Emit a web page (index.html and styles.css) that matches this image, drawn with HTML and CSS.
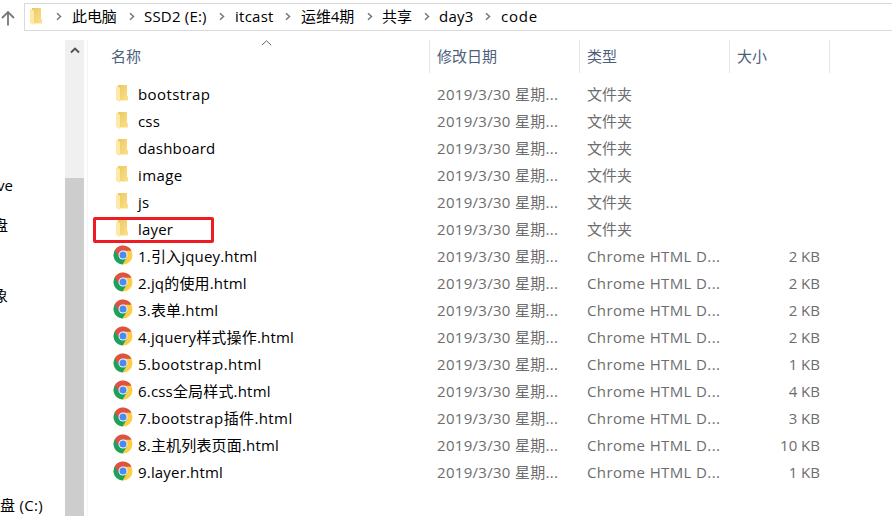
FILE: index.html
```html
<!DOCTYPE html>
<html lang="zh-CN">
<head>
<meta charset="utf-8">
<title>code</title>
<link rel="stylesheet" href="styles.css">
</head>
<body>
<svg class="defs" aria-hidden="true">
  <defs>
    <linearGradient id="fold" x1="0" x2="1" y1="0" y2="1"><stop offset="0" stop-color="#e9c863"/><stop offset="1" stop-color="#ffe08a"/></linearGradient>
    <symbol id="folder" viewBox="0 0 13 18">
      <path d="M2 0H11V11L12 11.5V15.5H2Z" fill="url(#fold)"/>
      <path d="M0 .5L4 3V17L0 15Z" fill="#ffe9a8"/>
    </symbol>
    <symbol id="chrome" viewBox="0 0 20 20">
      <circle cx="10" cy="10" r="9.5" fill="#ffcd42"/>
      <path d="M10 10L1.77 5.25A9.5 9.5 0 0 0 9.6 19.5L14 12.3Z" fill="#1aa260"/>
      <path d="M1.77 5.25A9.5 9.5 0 0 1 18.5 5.7H10L5.9 12.1Z" fill="#de5246"/>
      <circle cx="10" cy="10" r="4.5" fill="#f5f5f5"/>
      <circle cx="10" cy="10" r="3.5" fill="#4a8af4"/>
    </symbol>
    <symbol id="chev" viewBox="0 0 6 8"><path d="M1 .7L4.5 4L1 7.3" fill="none" stroke="#777" stroke-width="1.5"/></symbol>
  </defs>
</svg>
<div class="window">
  <header class="bar">
    <svg class="up" viewBox="0 0 16 16"><path d="M8 15.5V2M2 8L8 2L14 8" fill="none" stroke="#777" stroke-width="1.8"/></svg>
    <nav class="address">
      <svg class="folder"><use href="#folder"/></svg>
      <svg class="chev"><use href="#chev"/></svg><span>此电脑</span>
      <svg class="chev"><use href="#chev"/></svg><span class="drive">SSD2 (E:)</span>
      <svg class="chev"><use href="#chev"/></svg><span class="plain">itcast</span>
      <svg class="chev"><use href="#chev"/></svg><span>运维4期</span>
      <svg class="chev"><use href="#chev"/></svg><span>共享</span>
      <svg class="chev"><use href="#chev"/></svg><span class="plain">day3</span>
      <svg class="chev"><use href="#chev"/></svg><span class="last">code</span>
    </nav>
  </header>
  <main class="body">
    <aside class="tree"><span class="cut-ve">ve</span><span class="cut-glyph">盘</span><span class="cut-glyph">象</span><span class="disk">盘 (C:)</span></aside>
    <div class="scroll"><svg viewBox="0 0 10 7"><path d="M1 5.5L5 1.5L9 5.5" fill="none" stroke="#505050" stroke-width="1.8"/></svg><div class="thumb"></div></div>
    <section class="list">
      <div class="head"><span class="name">名称<svg class="sort" viewBox="0 0 11 6"><path d="M.8 5.2L5.5 .8L10.2 5.2" fill="none" stroke="#666"/></svg></span><span>修改日期</span><span>类型</span><span>大小</span></div>
      <div class="rows" id="rows"></div>
    </section>
  </main>
</div>
<script src="files.js"></script>
</body>
</html>
```
FILE: styles.css
```css
*, *::before { box-sizing: border-box; }
body { margin: 0; background: #fff; color: #000; font: 15px/20px "Open Sans", "Noto Sans CJK SC", sans-serif; }
.defs { position: absolute; width: 0; height: 0; }
.window { width: 892px; height: 516px; overflow: hidden; display: flex; flex-direction: column; white-space: nowrap; }
.bar { height: 40px; padding-top: 3px; display: flex; align-items: flex-start; }
.up { width: 16px; height: 16px; margin: 7px 8px 0 0; flex: none; }
.address { flex: 1; height: 28px; border: 1px solid #d9d9d9; border-right: 0; padding: 0 0 2px 5px; display: grid; grid-template-columns: 26px 16px 57px 15px 75px 16px 50px 16px 66px 15px 42px 15px 46px 16px 60px; align-items: center; }
.address span { letter-spacing: -0.1px; }
.address .drive { letter-spacing: 0.2px; }
.address .plain { letter-spacing: 0.25px; }
.address .last { letter-spacing: 0.8px; }
.folder { width: 13px; height: 18px; display: block; }
.address .folder { margin-top: 1px; }
.chev { width: 6px; height: 9px; }
.body { flex: 1; display: flex; min-height: 0; }
.tree { width: 65px; display: flex; flex-direction: column; padding-top: 135px; overflow: hidden; }
.tree span { height: 20px; }
.tree .cut-ve { margin: 0 0 20px -3px; }
.tree .cut-glyph { margin: 0 0 50px -7px; }
.tree .cut-glyph + .cut-glyph { margin-bottom: 190px; }
.tree .disk { letter-spacing: 0.3px; }
.scroll { width: 19px; background: #f0f0f0; display: flex; flex-direction: column; align-items: center; padding-top: 7px; }
.scroll svg { width: 10px; height: 7px; }
.thumb { width: 19px; background: #cdcdcd; flex: 1; margin-top: 124px; }
.list { flex: 1; margin-left: 3px; border-left: 1px solid #f5f5f5; }
.head { height: 32px; display: grid; grid-template-columns: 342px 150px 150px 100px; color: #4c607a; line-height: 33px; }
.head span { border-right: 1px solid #e5e5e5; padding-left: 7px; }
.head .name { padding-left: 23px; display: flex; }
.sort { width: 11px; height: 6px; margin-left: 120px; }
.rows { padding-top: 9px; }
.row { height: 27px; line-height: 27px; display: grid; grid-template-columns: 25px 24px 300px 150px 150px 83px; color: #6d6d6d; }
.row .icon { grid-column: 2; }
.row .folder { margin: 4px 0 0 3px; }
.chrome { width: 20px; height: 20px; margin-top: 2px; display: block; }
.row .title { color: #000; padding-left: 1px; letter-spacing: 0.18px; }
.row .title.wide { letter-spacing: 0.4px; }
.row .date { letter-spacing: 0.3px; }
.row .type.doc { letter-spacing: 0.38px; }
.row .size { text-align: right; }
.marked { position: relative; }
.marked::before { content: ""; position: absolute; left: 5px; top: 1px; width: 121px; height: 26px; border: 3px solid #ed1c24; border-radius: 2px; }
```
FILE: files.js
```js
const files = [
  ["bootstrap"], ["css"], ["dashboard"], ["image"], ["js"], ["layer"],
  ["1.引入jquey.html", 2], ["2.jq的使用.html", 2], ["3.表单.html", 2],
  ["4.jquery样式操作.html", 2], ["5.bootstrap.html", 1], ["6.css全局样式.html", 4],
  ["7.bootstrap插件.html", 3], ["8.主机列表页面.html", 10], ["9.layer.html", 1]
];
document.getElementById("rows").innerHTML = files.map(([name, size]) => {
  const icon = size ? "chrome" : "folder";
  const wide = name.includes("bootstrap") || name === "image";
  return `<div class="row${name === "layer" ? " marked" : ""}">
    <span class="icon"><svg class="${icon}"><use href="#${icon}"/></svg></span>
    <span class="title${wide ? " wide" : ""}">${name}</span><span class="date">2019/3/30 星期...</span>
    <span class="type${size ? " doc" : ""}">${size ? "Chrome HTML D..." : "文件夹"}</span>
    <span class="size">${size ? size + " KB" : ""}</span></div>`;
}).join("");
```
